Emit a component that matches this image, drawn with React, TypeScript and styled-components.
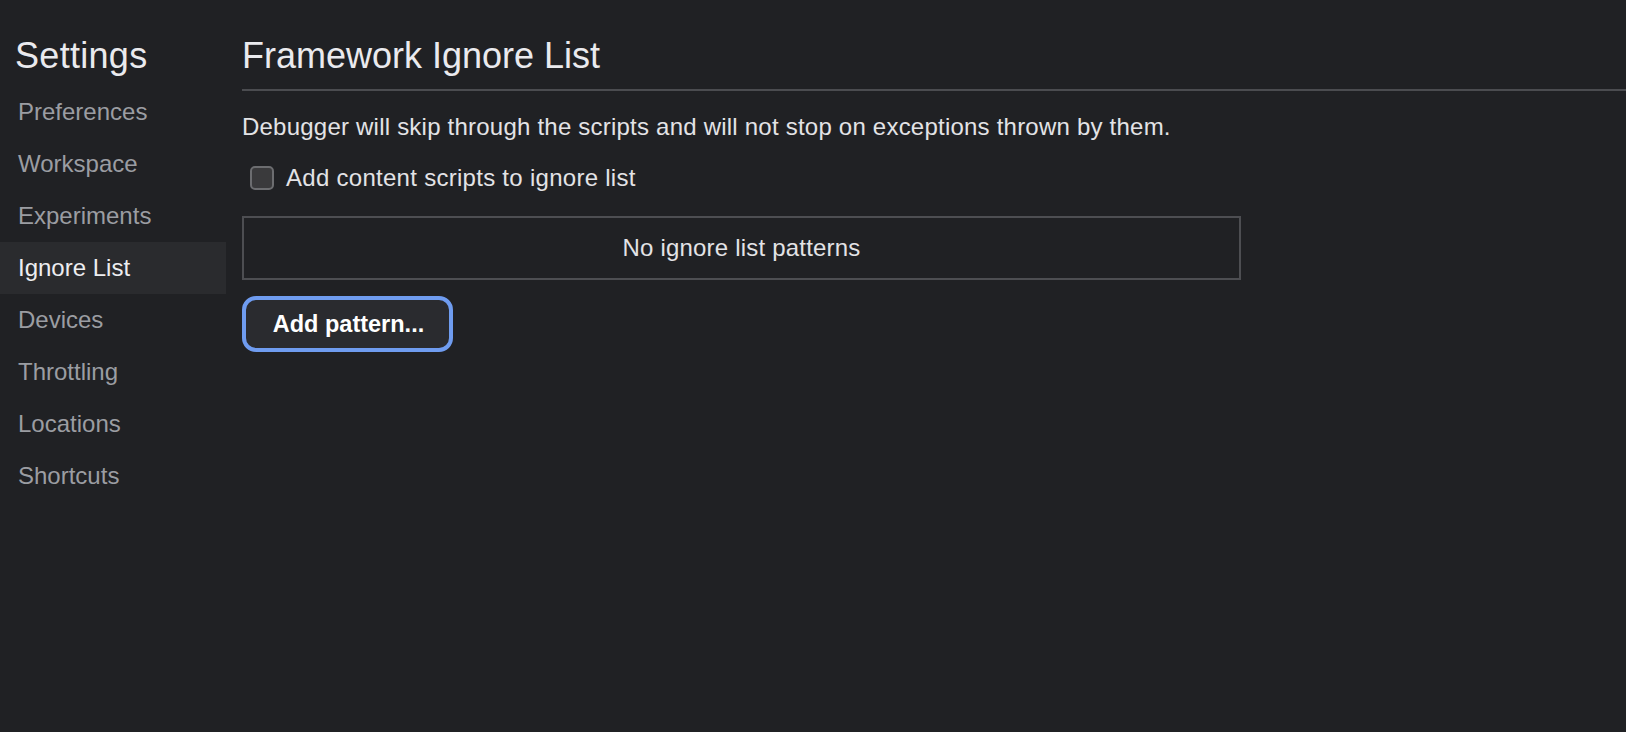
import React from "react";
import styled, { createGlobalStyle } from "styled-components";

const GlobalStyle = createGlobalStyle`
  html, body {
    margin: 0;
    padding: 0;
    background: #202124;
  }
  body {
    font-family: "Liberation Sans", Arial, Helvetica, sans-serif;
    color: #e3e3e6;
  }
`;

const Page = styled.div`
  display: grid;
  grid-template-columns: 226px 1fr;
  height: 732px;
  background: #202124;
  overflow: hidden;
`;

const Sidebar = styled.nav`
  display: flex;
  flex-direction: column;
  padding-top: 34px;
`;

const SidebarTitle = styled.h1`
  margin: 0 0 8px;
  padding-left: 15px;
  font-size: 36px;
  line-height: 44px;
  font-weight: 400;
  letter-spacing: 0.3px;
  color: #eaeaee;
`;

const NavItem = styled.div<{ $active?: boolean }>`
  height: 52px;
  line-height: 52px;
  padding-left: 18px;
  font-size: 24px;
  color: ${(p) => (p.$active ? "#ededf0" : "#9b9da2")};
  background: ${(p) => (p.$active ? "#2a2b2e" : "transparent")};
`;

const Main = styled.main`
  display: flex;
  flex-direction: column;
  align-items: flex-start;
  padding: 34px 0 0 16px;
`;

const Header = styled.h2`
  align-self: stretch;
  margin: 0;
  padding: 0 0 11px 0;
  font-size: 36px;
  line-height: 44px;
  font-weight: 400;
  color: #eaeaee;
  border-bottom: 2px solid #4b4c50;
`;

const Description = styled.p`
  margin: 22px 0 0;
  font-size: 24px;
  line-height: 28px;
  letter-spacing: 0.22px;
  color: #e3e3e6;
`;

const CheckRow = styled.label`
  display: flex;
  align-items: center;
  gap: 12px;
  margin: 23px 0 0 8px;
  height: 28px;
  font-size: 24px;
  letter-spacing: 0.28px;
  color: #e3e3e6;
`;

const Box = styled.span`
  width: 20px;
  height: 20px;
  border: 2px solid #6c6d70;
  border-radius: 5px;
  background: #3a3a3c;
`;

const PatternList = styled.div`
  box-sizing: border-box;
  width: 999px;
  height: 64px;
  margin-top: 24px;
  border: 2px solid #4d4e52;
  display: flex;
  align-items: center;
  justify-content: center;
  font-size: 24px;
  letter-spacing: 0.2px;
  color: #e3e3e6;
`;

const Button = styled.button`
  box-sizing: border-box;
  margin-top: 16px;
  width: 211px;
  height: 56px;
  padding: 0 0 0 2px;
  border: 4px solid #6f9cf0;
  border-radius: 14px;
  background: #2a2b2f;
  color: #ffffff;
  font-family: "Liberation Sans", Arial, sans-serif;
  font-size: 23.5px;
  font-weight: 700;
  text-align: center;
`;

const navItems = [
  "Preferences",
  "Workspace",
  "Experiments",
  "Ignore List",
  "Devices",
  "Throttling",
  "Locations",
  "Shortcuts",
];

function App() {
  return (
    <>
      <GlobalStyle />
      <Page>
        <Sidebar>
          <SidebarTitle>Settings</SidebarTitle>
          {navItems.map((item) => (
            <NavItem key={item} $active={item === "Ignore List"}>
              {item}
            </NavItem>
          ))}
        </Sidebar>
        <Main>
          <Header>Framework Ignore List</Header>
          <Description>
            Debugger will skip through the scripts and will not stop on
            exceptions thrown by them.
          </Description>
          <CheckRow>
            <Box />
            Add content scripts to ignore list
          </CheckRow>
          <PatternList>No ignore list patterns</PatternList>
          <Button>Add pattern...</Button>
        </Main>
      </Page>
    </>
  );
}

export default App;
